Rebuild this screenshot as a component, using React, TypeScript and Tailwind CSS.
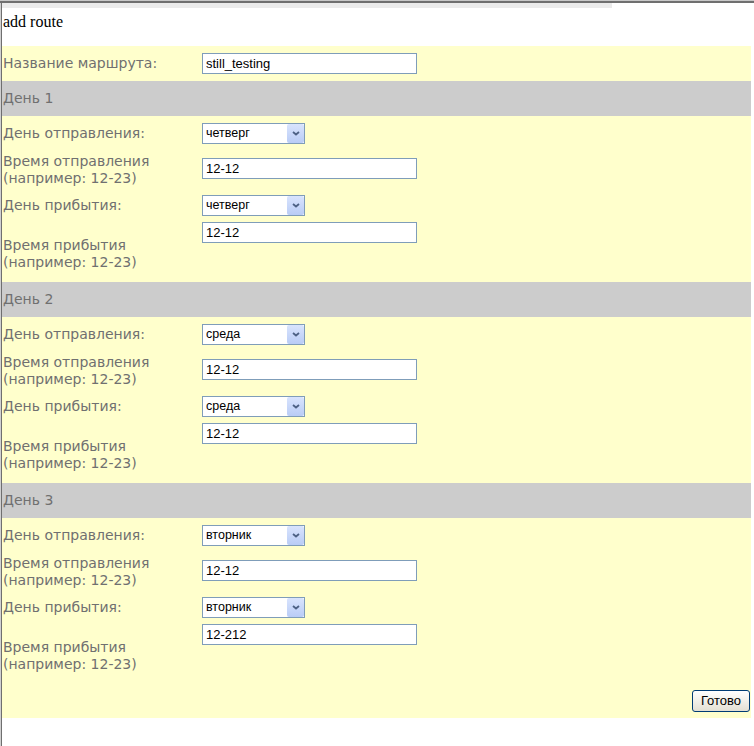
interface Day {
    title: string;
    depDay: string;
    depTime: string;
    arrDay: string;
    arrTime: string;
}

const days: Day[] = [
    { title: "День 1", depDay: "четверг", depTime: "12-12", arrDay: "четверг", arrTime: "12-12" },
    { title: "День 2", depDay: "среда", depTime: "12-12", arrDay: "среда", arrTime: "12-12" },
    { title: "День 3", depDay: "вторник", depTime: "12-12", arrDay: "вторник", arrTime: "12-212" },
];

const weekdays = ["понедельник", "вторник", "среда", "четверг", "пятница", "суббота", "воскресенье"];

const labelCls = "w-[200px] shrink-0 pl-px text-[14px] leading-[17px] text-[#707070] font-['DejaVu_Sans',Verdana,sans-serif]";

const TextInput = ({ value }: { value: string }) => (
    <input
        defaultValue={value}
        className="block w-[215px] h-[21px] border border-[#7f9db9] bg-white px-[3px] text-[13px] text-black font-['Liberation_Sans',Arial,sans-serif] outline-none"
    />
);

const DaySelect = ({ value }: { value: string }) => (
    <div className="relative w-[103px] h-[21px]">
        <select
            defaultValue={value}
            className="block appearance-none w-full h-full border border-[#7f9db9] bg-white pl-[3px] text-[12.5px] text-black font-['Liberation_Sans',Arial,sans-serif] outline-none"
        >
            {weekdays.map((d) => (
                <option key={d} value={d}>{d}</option>
            ))}
        </select>
        {/* xp-style dropdown button */}
        <div className="pointer-events-none absolute right-px top-px bottom-px w-[17px] rounded-[2px] bg-gradient-to-b from-[#d9e4fd] to-[#b9ccf6] flex items-center justify-center">
            <svg width="8" height="5" viewBox="0 0 8 5" fill="none">
                <path d="M1 1l3 2.5L7 1" stroke="#4d6185" strokeWidth="1.8" />
            </svg>
        </div>
    </div>
);

const DayBlock = ({ day }: { day: Day }) => (
    <div>
        <div className="h-[35px] bg-[#cccccc] flex items-center">
            <span className={labelCls}>{day.title}</span>
        </div>
        <div className="h-[166px] flex flex-col">
            <div className="h-[34px] flex items-center">
                <span className={labelCls}>День отправления:</span>
                <DaySelect value={day.depDay} />
            </div>
            <div className="h-[38px] flex items-start">
                <span className={`${labelCls} pt-[3px]`}>
                    Время отправления
                    <br />
                    (например: 12-23)
                </span>
                <div className="pt-[8px]">
                    <TextInput value={day.depTime} />
                </div>
            </div>
            <div className="h-[34px] flex items-center">
                <span className={labelCls}>День прибытия:</span>
                <DaySelect value={day.arrDay} />
            </div>
            <div className="h-[60px] flex items-center">
                <span className={`${labelCls} pt-[3px]`}>
                    Время прибытия
                    <br />
                    (например: 12-23)
                </span>
                <div className="self-start">
                    <TextInput value={day.arrTime} />
                </div>
            </div>
        </div>
    </div>
);

const App = () => {
    return (
        <div className="min-h-screen bg-white">
            {/* frame edge */}
            <div className="h-px bg-[#c8c8c8]" />
            <div className="h-[2px] bg-[#6f6f6f]" />
            <div className="flex border-l border-[#d0d0d0]">
                <div className="border-l border-[#6f6f6f] h-[5px] w-[611px] bg-[#ebebeb]" />
            </div>

            <div className="border-l border-[#d0d0d0] min-h-[738px]">
                <div className="border-l border-[#6f6f6f] min-h-[738px]">
                    <div className="h-[38px] pt-[1px] pl-px">
                        <span className="text-[16px] leading-[18px] text-black font-['Liberation_Serif','Times_New_Roman',serif]">add route</span>
                    </div>

                    <form className="w-[749px] bg-[#ffffcc]">
                        <div className="h-[35px] flex items-center">
                            <span className={labelCls}>Название маршрута:</span>
                            <TextInput value="still_testing" />
                        </div>

                        {days.map((day) => (
                            <DayBlock key={day.title} day={day} />
                        ))}

                        <div className="h-[34px] flex items-center justify-end pr-px">
                            <button
                                type="button"
                                className="h-[22px] w-[58px] rounded-[3px] border border-[#003c74] bg-gradient-to-b from-white to-[#e3e0d4] text-[13px] text-black font-['Liberation_Sans',Arial,sans-serif]"
                            >
                                Готово
                            </button>
                        </div>
                    </form>
                </div>
            </div>
        </div>
    );
};

export default App;
